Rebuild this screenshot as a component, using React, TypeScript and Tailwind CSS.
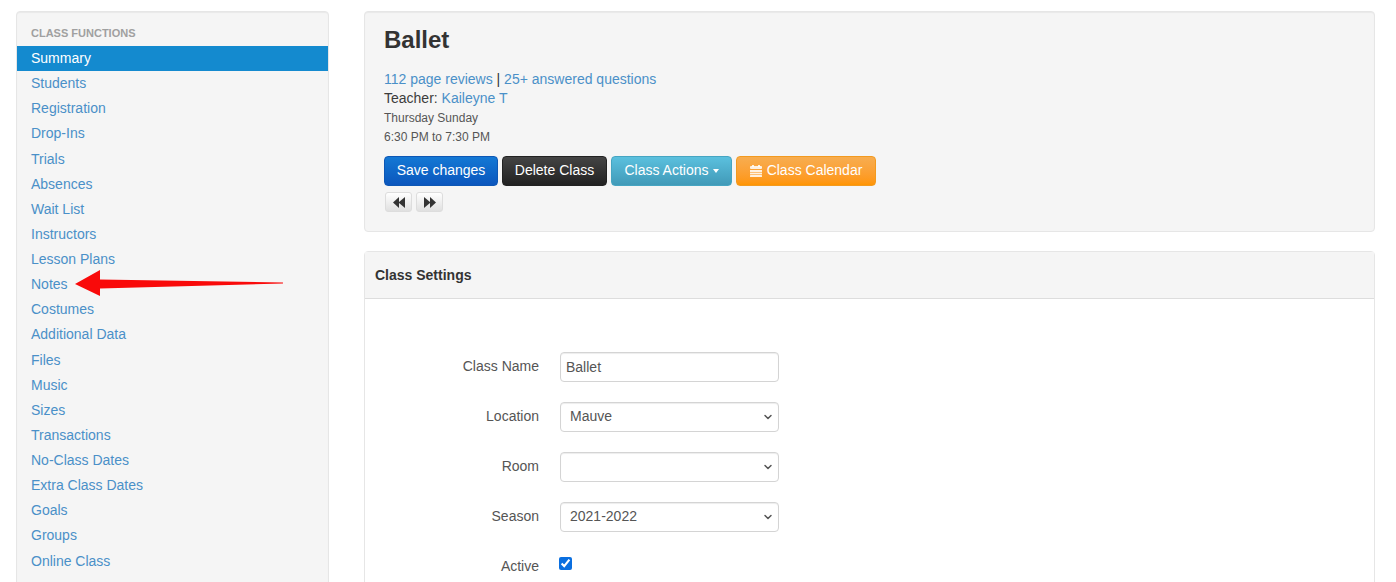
import { ChevronDown } from "lucide-react";

const navItems = [
  "Summary",
  "Students",
  "Registration",
  "Drop-Ins",
  "Trials",
  "Absences",
  "Wait List",
  "Instructors",
  "Lesson Plans",
  "Notes",
  "Costumes",
  "Additional Data",
  "Files",
  "Music",
  "Sizes",
  "Transactions",
  "No-Class Dates",
  "Extra Class Dates",
  "Goals",
  "Groups",
  "Online Class",
];

function Sidebar() {
  return (
    <aside className="relative w-[313px] h-[600px] shrink-0 rounded-t border border-[#e6e6e6] bg-[#f5f5f5] pt-[13px] shadow-[inset_0_1px_1px_rgba(0,0,0,0.05)]">
      <div className="h-[21px] pl-[14px] text-[11px] leading-[16px] font-bold text-[#a0a0a0] uppercase">Class Functions</div>
      <ul>
        {navItems.map((item, i) => (
          <li
            key={item}
            className={
              i === 0
                ? "h-[25.14px] pl-[14px] leading-[25px] bg-[#148ACF] text-white"
                : "h-[25.14px] pl-[14px] leading-[25px] text-[#4a90c8]"
            }
          >
            {item}
          </li>
        ))}
      </ul>
      {/* Red annotation arrow */}
      <svg className="absolute left-[57px] top-[257px]" width="210" height="28" viewBox="0 0 210 28">
        <polygon points="1,15 26,1 26,10.5 209,13.5 209,14.5 26,19.5 26,27" fill="#f90a0a" />
      </svg>
    </aside>
  );
}

function ActionButton({ className, children }: { className: string; children: React.ReactNode }) {
  return (
    <button className={`h-[30px] pb-[1px] rounded border text-[14px] text-white flex items-center justify-center ${className}`}>
      {children}
    </button>
  );
}

function BackIcon() {
  return (
    <svg width="12" height="11" viewBox="0 0 12 11" fill="#333333">
      <polygon points="0,5.5 6,0 6,11" />
      <polygon points="5.5,5.5 12,0 12,11" />
    </svg>
  );
}

function ForwardIcon() {
  return (
    <svg width="12" height="11" viewBox="0 0 12 11" fill="#333333">
      <polygon points="12,5.5 6,0 6,11" />
      <polygon points="6.5,5.5 0,0 0,11" />
    </svg>
  );
}

function CalendarIcon() {
  return (
    <svg width="12" height="12" viewBox="0 0 12 12" fill="#ffffff" fillOpacity="0.85">
      <rect x="2" y="0" width="2" height="2" />
      <rect x="8" y="0" width="2" height="2" />
      <rect x="0" y="1" width="12" height="3" rx="1" />
      <rect x="0" y="5" width="12" height="2" />
      <rect x="0" y="7.6" width="12" height="1.8" />
      <rect x="0" y="10" width="12" height="2" rx="0.5" />
    </svg>
  );
}

function HeaderCard() {
  return (
    <section className="h-[221px] rounded border border-[#e6e6e6] bg-[#f5f5f5] pl-[19px] pt-[14px] shadow-[inset_0_1px_1px_rgba(0,0,0,0.05)]">
      <h1 className="text-[24px] leading-[28px] font-bold text-[#333333]">Ballet</h1>
      <div className="mt-[16px] leading-[19px] text-[#4a90c8]">
        112 page reviews <span className="text-[#333333]">|</span> 25+ answered questions
      </div>
      <div className="leading-[19px] text-[#3c3c3c]">
        Teacher: <span className="text-[#4a90c8]">Kaileyne T</span>
      </div>
      <div className="mt-[1px] text-[12px] leading-[19px] text-[#555555]">Thursday Sunday</div>
      <div className="text-[12px] leading-[19px] text-[#555555]">6:30 PM to 7:30 PM</div>
      <div className="mt-[9px] flex gap-[4px]">
        <ActionButton className="w-[114px] border-[#0d57b5] bg-gradient-to-b from-[#1478d4] to-[#0c56bd]">
          Save changes
        </ActionButton>
        <ActionButton className="w-[105px] border-[#222222] bg-gradient-to-b from-[#444444] to-[#222222]">
          Delete Class
        </ActionButton>
        <ActionButton className="w-[121px] border-[#46a5c2] bg-gradient-to-b from-[#5bc0de] to-[#419ab8]">
          Class Actions
          <span className="ml-[4px] border-x-[3.5px] border-t-[4px] border-x-transparent border-t-white" />
        </ActionButton>
        <ActionButton className="w-[140px] gap-[5px] border-[#f39a1f] bg-gradient-to-b from-[#f7ad4f] to-[#ff9500]">
          <CalendarIcon />
          Class Calendar
        </ActionButton>
      </div>
      <div className="mt-[6px] ml-[1px] flex gap-[4px]">
        <button className="w-[27px] h-[20px] rounded-[3px] border border-[#dddddd] bg-gradient-to-b from-[#ffffff] to-[#e0e0e0] flex items-center justify-center">
          <BackIcon />
        </button>
        <button className="w-[27px] h-[20px] rounded-[3px] border border-[#dddddd] bg-gradient-to-b from-[#ffffff] to-[#e0e0e0] flex items-center justify-center">
          <ForwardIcon />
        </button>
      </div>
    </section>
  );
}

function FormRow({ label, children }: { label: string; children: React.ReactNode }) {
  return (
    <div className="flex h-[30px] mb-[20px] items-center">
      <label className="w-[174px] pb-[2px] text-right text-[#555555]">{label}</label>
      <div className="ml-[21px] w-[219px]">{children}</div>
    </div>
  );
}

const fieldClass =
  "w-full h-[30px] rounded border border-[#d4d4d4] bg-white text-[14px] text-[#555555] shadow-[inset_0_1px_1px_rgba(0,0,0,0.075)] outline-none";

function SelectField({ value }: { value: string }) {
  return (
    <div className="relative">
      <select className={`${fieldClass} appearance-none pl-[9px] pb-[1px]`} defaultValue={value}>
        <option>{value}</option>
      </select>
      <ChevronDown className="absolute right-[5px] top-[9px] w-[12px] h-[12px] text-[#555555]" strokeWidth={3} />
    </div>
  );
}

function SettingsCard() {
  return (
    <section className="mt-[19px] h-[360px] rounded-t border border-[#e6e6e6] bg-white">
      <div className="h-[47px] border-b border-[#dddddd] bg-[#f5f5f5] pl-[10px] leading-[46px] font-bold text-[#333333]">
        Class Settings
      </div>
      <div className="pt-[53px]">
        <FormRow label="Class Name">
          <input className={`${fieldClass} px-[5px]`} defaultValue="Ballet" readOnly />
        </FormRow>
        <FormRow label="Location">
          <SelectField value="Mauve" />
        </FormRow>
        <FormRow label="Room">
          <SelectField value="" />
        </FormRow>
        <FormRow label="Season">
          <SelectField value="2021-2022" />
        </FormRow>
        <FormRow label="Active">
          <input type="checkbox" defaultChecked className="block w-[13px] h-[13px] -mt-[7px] -ml-[1px] accent-[#0a6fe0]" />
        </FormRow>
      </div>
    </section>
  );
}

export default function App() {
  return (
    <div className="h-[582px] overflow-hidden bg-white font-['Liberation_Sans',Arial,sans-serif] text-[14px]">
      <div className="flex pt-[11px] pl-[16px]">
        <Sidebar />
        <main className="ml-[35px] w-[1011px]">
          <HeaderCard />
          <SettingsCard />
        </main>
      </div>
    </div>
  );
}
